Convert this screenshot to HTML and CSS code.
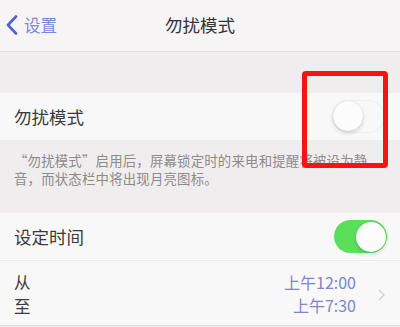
FILE: index.html
```html
<!DOCTYPE html>
<html lang="zh">
<head>
<meta charset="utf-8">
<link rel="stylesheet" href="styles.css">
</head>
<body>
<div class="screen">
  <header class="nav">
    <div class="back">
      <svg class="chev" width="12" height="20" viewBox="0 0 12 20"><polyline points="10,1.5 2,10 10,18.5" fill="none" stroke="#4b62d2" stroke-width="2.6" stroke-linecap="round" stroke-linejoin="round"/></svg>
      <span class="back-text">设置</span>
    </div>
    <div class="title">勿扰模式</div>
    <div></div>
  </header>
  <div class="gap1"></div>
  <div class="row row1">
    <span class="label">勿扰模式</span>
    <span class="toggle off"><span class="knob"></span></span>
  </div>
  <p class="note">“勿扰模式”启用后，屏幕锁定时的来电和提醒将被设为静音，而状态栏中将出现月亮图标。</p>
  <div class="row row2">
    <span class="label">设定时间</span>
    <span class="toggle on"><span class="knob"></span></span>
  </div>
  <div class="row row3">
    <div class="fromto"><span>从</span><span>至</span></div>
    <div class="times"><span>上午12:00</span><span>上午7:30</span></div>
    <svg class="rchev" width="8" height="12" viewBox="0 0 8 12"><polyline points="1.5,1.5 6,6 1.5,10.5" fill="none" stroke="#cfcfd4" stroke-width="1.4" stroke-linecap="round" stroke-linejoin="round"/></svg>
  </div>
  <div class="highlight"></div>
</div>
</body>
</html>
```
FILE: styles.css
```css
html, body {
  margin: 0;
  padding: 0;
}
body {
  width: 400px;
  height: 327px;
  overflow: hidden;
  background: #efeded;
  font-family: "Noto Sans CJK SC", "Noto Sans", sans-serif;
}
.screen {
  position: relative;
  width: 400px;
  height: 327px;
  overflow: hidden;
}
.nav {
  height: 52px;
  background: #f6f4f4;
  border-bottom: 1px solid #e2e0e0;
  display: grid;
  grid-template-columns: 1fr auto 1fr;
  align-items: center;
  box-sizing: border-box;
}
.back {
  display: flex;
  align-items: center;
  padding-left: 6px;
  gap: 6px;
  margin-top: -2px;
}
.back-text {
  color: #7a88d6;
  font-size: 16.5px;
}
.title {
  color: #333;
  font-size: 17.5px;
  margin-top: -2px;
}
.gap1 {
  height: 41px;
}
.row {
  background: #f9f8f8;
  display: flex;
  align-items: center;
  padding: 0 14px;
}
.row1 {
  height: 47px;
  justify-content: space-between;
}
.label {
  font-size: 17.5px;
  color: #3a3a3a;
}
.note {
  margin: 0;
  padding: 11px 14px 0 14px;
  height: 62px;
  box-sizing: border-box;
  height: 73px;
  font-size: 13.4px;
  line-height: 18px;
  color: #8c8b8b;
  letter-spacing: 0.2px;
}
.row2 {
  height: 47px;
  justify-content: space-between;
  padding-right: 13px;
  border-bottom: 1px solid #ecebeb;
}
.row3 {
  height: 64px;
  border-bottom: 1px solid #dcdada;
  padding-right: 14px;
}
.fromto {
  display: flex;
  flex-direction: column;
  font-size: 16.5px;
  line-height: 24px;
  color: #3a3a3a;
  margin-top: 2px;
}
.times {
  margin-left: auto;
  display: flex;
  flex-direction: column;
  align-items: flex-end;
  font-size: 16px;
  line-height: 23px;
  color: #7d86c9;
  margin-right: 22px;
  margin-top: 2px;
}
.rchev {
  margin-top: 4px;
}
.toggle {
  position: relative;
  width: 53px;
  height: 33px;
  border-radius: 17px;
  box-sizing: border-box;
}
.toggle.off {
  background: #f9f8f8;
  border: 1.5px solid #ededed;
  margin-right: 1px;
}
.toggle.on {
  background: #5bdf5a;
}
.knob {
  position: absolute;
  top: 1px;
  width: 30px;
  height: 30px;
  border-radius: 50%;
  background: #fcfcfc;
  box-shadow: 0 2px 4px rgba(0,0,0,0.16), 0 0 1px rgba(0,0,0,0.15);
}
.toggle.off .knob {
  left: 0;
  top: 0;
}
.toggle.on .knob {
  right: 1.5px;
  top: 1.5px;
}
.highlight {
  position: absolute;
  left: 302px;
  top: 71px;
  width: 86px;
  height: 97px;
  box-sizing: border-box;
  border: 5px solid #f5140f;
  border-radius: 4px;
}
```
